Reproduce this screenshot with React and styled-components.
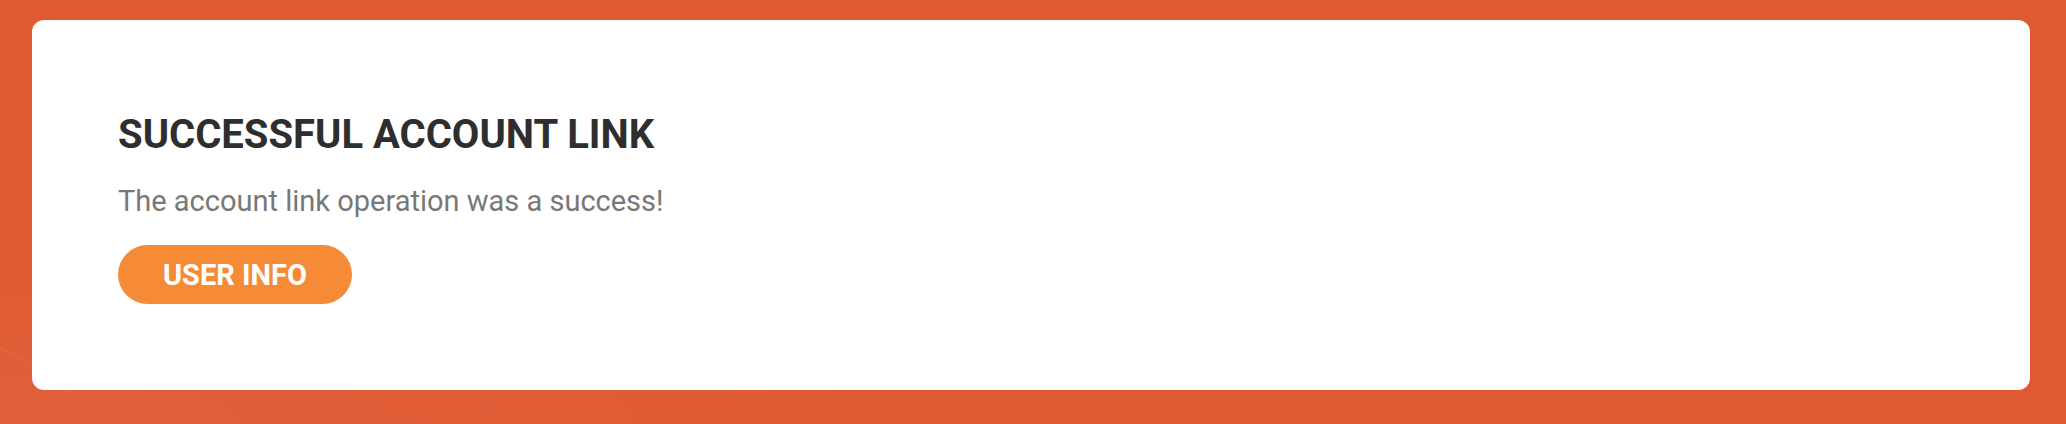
import React from 'react';
import styled, { createGlobalStyle } from 'styled-components';

const GlobalStyle = createGlobalStyle`
  html, body {
    margin: 0;
    padding: 0;
    background: #df5a33;
  }
  * { box-sizing: border-box; }
`;

const Page = styled.div`
  position: relative;
  height: 424px;
  padding: 20px 36px 34px 32px;
  background: radial-gradient(ellipse at 0% 100%, #e1613a 0%, #df5a33 30%),
    #df5a33;
  overflow: hidden;
  font-family: Roboto, 'Liberation Sans', sans-serif;
`;

const Waves = styled.svg`
  position: absolute;
  inset: 0;
  pointer-events: none;
`;

const Card = styled.div`
  position: relative;
  height: 100%;
  background: #ffffff;
  border-radius: 12px;
  padding: 91px 86px 0;
  display: flex;
  flex-direction: column;
  align-items: flex-start;
`;

const Title = styled.h1`
  margin: 0;
  font-size: 40px;
  line-height: 48px;
  font-weight: 700;
  color: #2e2e2e;
  text-transform: uppercase;
`;

const Message = styled.p`
  margin: 25px 0 0;
  font-size: 29px;
  line-height: 35px;
  color: #787878;
`;

const ActionButton = styled.button`
  margin-top: 26px;
  height: 59px;
  padding: 0 45px;
  border: none;
  border-radius: 30px;
  background: #f58b37;
  color: #ffffff;
  font-family: inherit;
  font-size: 29px;
  font-weight: 700;
  text-transform: uppercase;
  cursor: pointer;
`;

const App = () => (
  <>
    <GlobalStyle />
    <Page>
      {/* faint swirls in the backdrop */}
      <Waves width="2066" height="424" viewBox="0 0 2066 424">
        <path d="M-40 330 C 40 360, 80 400, 120 440" stroke="#e4653d" strokeWidth="3" fill="none" opacity="0.5" />
        <path d="M700 424 C 760 395, 820 395, 880 424" stroke="#e2623c" strokeWidth="2" fill="none" opacity="0.4" />
        <path d="M1700 424 C 1740 400, 1760 395, 1790 395" stroke="#e2623c" strokeWidth="2" fill="none" opacity="0.4" />
      </Waves>
      <Card>
        <Title>Successful account link</Title>
        <Message>The account link operation was a success!</Message>
        <ActionButton type="button">User info</ActionButton>
      </Card>
    </Page>
  </>
);

export default App;
